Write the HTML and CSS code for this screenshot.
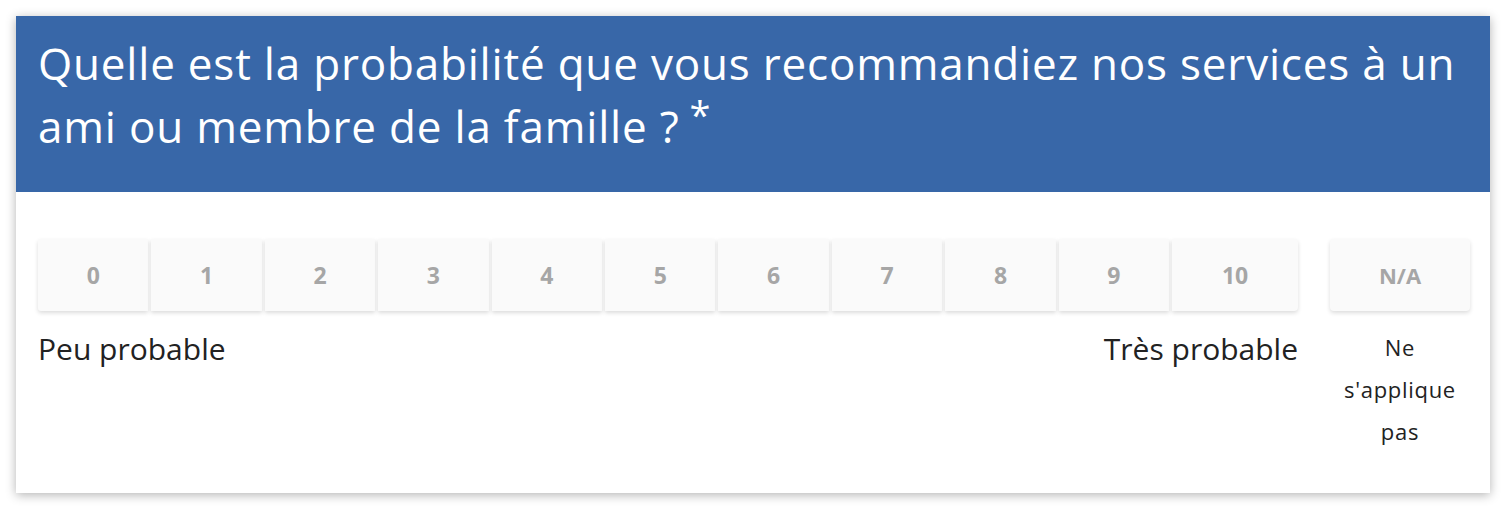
FILE: index.html
```html
<!DOCTYPE html>
<html lang="fr">

<head>
    <meta charset="UTF-8">
    <meta name="viewport" content="width=device-width, initial-scale=1.0">
    <title>Question NPS</title>
    <link rel="stylesheet" href="styles.css">
</head>

<body>
    <div class="card">
        <div class="question">
            <h2>Quelle est la probabilité que vous recommandiez nos services à un ami ou membre de la famille ?<span class="required">*</span></h2>
        </div>

        <div class="answer">
            <div class="scale">
                <div class="options">
                    <button type="button" class="option">0</button>
                    <button type="button" class="option">1</button>
                    <button type="button" class="option">2</button>
                    <button type="button" class="option">3</button>
                    <button type="button" class="option">4</button>
                    <button type="button" class="option">5</button>
                    <button type="button" class="option">6</button>
                    <button type="button" class="option">7</button>
                    <button type="button" class="option">8</button>
                    <button type="button" class="option">9</button>
                    <button type="button" class="option last">10</button>
                </div>
                <div class="ends">
                    <span>Peu probable</span>
                    <span>Très probable</span>
                </div>
            </div>

            <div class="na">
                <button type="button" class="option na-option">N/A</button>
                <p class="na-label">Ne s'applique pas</p>
            </div>
        </div>
    </div>
</body>

</html>
```

FILE: styles.css
```css
body {
    margin: 0;
    padding: 16px;
    background-color: #fff;
    font-family: "Open Sans", sans-serif;
    color: #222;
}

.card {
    background-color: #fff;
    box-shadow: 0 2px 10px rgba(0, 0, 0, 0.3);
}

.question {
    background-color: #3867a8;
    color: #fff;
    padding: 16px 18px 34px 22px;
}

.question h2 {
    margin: 0;
    font-size: 44px;
    font-weight: 400;
    line-height: 63px;
    letter-spacing: 0.8px;
}

.required {
    font-size: 38px;
    vertical-align: 14px;
    margin-left: 10px;
    line-height: 1;
}

.answer {
    display: flex;
    gap: 32px;
    padding: 47px 20px 41px 22px;
}

.scale {
    flex: 1;
}

.options {
    display: flex;
    gap: 3px;
}

.option {
    flex: 1;
    height: 72px;
    border: none;
    background-color: #fafafa;
    box-shadow: 0 2px 4px rgba(0, 0, 0, 0.14);
    font-family: inherit;
    font-size: 23px;
    font-weight: 700;
    color: #a6a6a6;
    cursor: pointer;
    padding: 0;
}

.options .option:first-child {
    border-radius: 3px 0 0 3px;
}

.option.last {
    flex: 0 0 126px;
    border-radius: 0 4px 4px 0;
}

.ends {
    display: flex;
    justify-content: space-between;
    margin-top: 17px;
    font-size: 30px;
}

.na {
    width: 140px;
    text-align: center;
}

.na-option {
    width: 100%;
    border-radius: 4px;
    font-size: 22px;
}

.na-label {
    margin: 15px 0 0 0;
    font-size: 22px;
    line-height: 42px;
    letter-spacing: 0.7px;
}
```
